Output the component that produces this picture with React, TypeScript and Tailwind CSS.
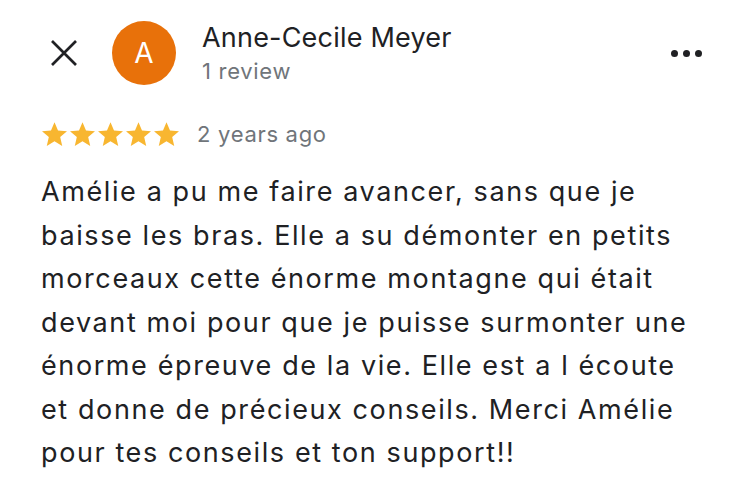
const Star = () => (
  <svg width="25" height="24" viewBox="2 2 20 19" className="shrink-0">
    <path
      d="M12 17.27L18.18 21l-1.64-7.03L22 9.24l-7.19-.61L12 2 9.19 8.63 2 9.24l5.46 4.73L5.82 21z"
      fill="#f8b630"
    />
  </svg>
);

const App = () => {
  const review = {
    author: "Anne-Cecile Meyer",
    initial: "A",
    count: "1 review",
    when: "2 years ago",
    lines: [
      "Amélie a pu me faire avancer, sans que je",
      "baisse les bras. Elle a su démonter en petits",
      "morceaux cette énorme montagne qui était",
      "devant moi pour que je puisse surmonter une",
      "énorme épreuve de la vie. Elle est a l écoute",
      "et donne de précieux conseils. Merci Amélie",
      "pour tes conseils et ton support!!",
    ],
  };

  return (
    <div className="w-[749px] h-[501px] bg-white overflow-hidden font-['Inter',sans-serif] text-[#202124]">
      <div className="flex items-start pt-[21px] pl-[50px] pr-[47px]">
        <div className="h-[64px] flex items-center">
          <svg width="28" height="28" viewBox="0 0 28 28">
            <path d="M2 2L26 26M26 2L2 26" stroke="#202124" strokeWidth="2.7" />
          </svg>
        </div>

        <div className="ml-[34px] w-[64px] h-[64px] rounded-full bg-[#e8710a] flex items-center justify-center text-white text-[28px] leading-none">
          {review.initial}
        </div>

        <div className="ml-[26px] mt-[1px] flex flex-col">
          <span className="text-[27px] leading-[32px] tracking-[0.2px]">{review.author}</span>
          <span className="mt-[3px] text-[22px] leading-[28px] tracking-[0.7px] text-[#70757a]">{review.count}</span>
        </div>

        <div className="ml-auto h-[64px] flex items-center gap-[5px]">
          <span className="w-[7px] h-[7px] rounded-full bg-[#202124]" />
          <span className="w-[7px] h-[7px] rounded-full bg-[#202124]" />
          <span className="w-[7px] h-[7px] rounded-full bg-[#202124]" />
        </div>
      </div>

      <div className="flex items-center h-[28px] mt-[35px] pl-[42px]">
        <div className="flex gap-[3px]">
          <Star />
          <Star />
          <Star />
          <Star />
          <Star />
        </div>
        <span className="ml-[18px] text-[22px] leading-[28px] tracking-[0.7px] text-[#70757a]">{review.when}</span>
      </div>

      <div className="mt-[22px] pl-[41px] text-[27px] leading-[43.5px] tracking-[1.6px]">
        {review.lines.map((line) => (
          <div key={line} className="whitespace-nowrap">
            {line}
          </div>
        ))}
      </div>
    </div>
  );
};

export default App;
